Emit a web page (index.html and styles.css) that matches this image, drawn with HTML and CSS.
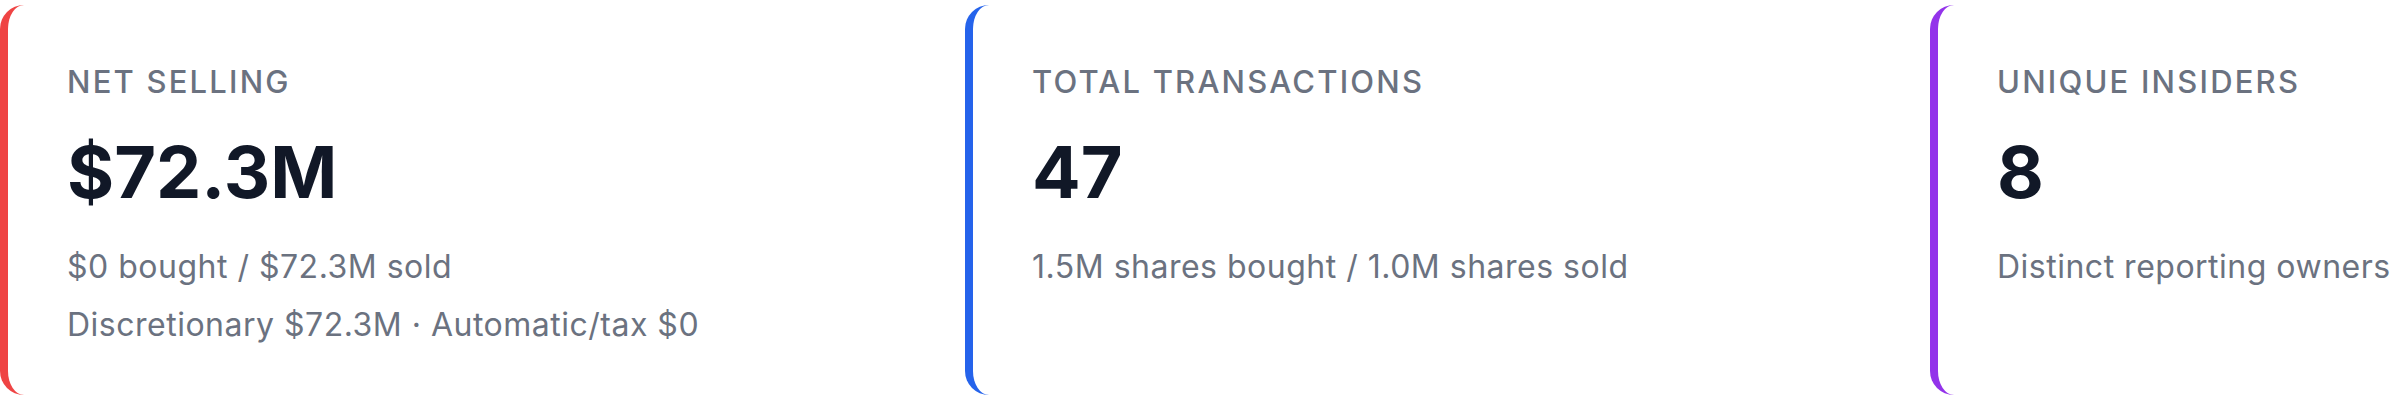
FILE: index.html
```html
<!DOCTYPE html>
<html lang="en">
<head>
<meta charset="utf-8">
<title>Insider summary</title>
<link rel="stylesheet" href="styles.css">
</head>
<body>
<div class="stats">
  <div class="card card-red">
    <div class="label">Net Selling</div>
    <div class="value">$72.3M</div>
    <div class="sub sub-first">$0 bought / $72.3M sold</div>
    <div class="sub sub-next">Discretionary $72.3M · Automatic/tax $0</div>
  </div>
  <div class="card card-blue">
    <div class="label">Total Transactions</div>
    <div class="value">47</div>
    <div class="sub sub-first">1.5M shares bought / 1.0M shares sold</div>
  </div>
  <div class="card card-purple">
    <div class="label">Unique Insiders</div>
    <div class="value">8</div>
    <div class="sub sub-first">Distinct reporting owners</div>
  </div>
</div>
</body>
</html>
```

FILE: styles.css
```css
html, body {
  margin: 0;
  padding: 0;
  background: #ffffff;
}

body {
  font-family: Inter, "Liberation Sans", sans-serif;
  overflow: hidden;
  width: 2400px;
  height: 401px;
}

.stats {
  display: grid;
  grid-template-columns: repeat(3, 933px);
  column-gap: 32px;
  padding-top: 5px;
}

.card {
  box-sizing: border-box;
  height: 390px;
  background: #ffffff;
  border-left: 8px solid #ef4444;
  border-radius: 24px;
  padding: 57px 40px 0 59px;
}

.card-red { border-left-color: #ef4444; }
.card-blue { border-left-color: #2563eb; }
.card-purple { border-left-color: #9333ea; }

.label {
  font-size: 31px;
  line-height: 40px;
  text-transform: uppercase;
  letter-spacing: 2.2px;
  color: #6b7280;
  font-weight: 500;
}

.value {
  margin-top: 30px;
  font-size: 72px;
  line-height: 80px;
  font-weight: 700;
  color: #111827;
}

.sub {
  font-size: 32px;
  line-height: 40px;
  letter-spacing: 0.5px;
  color: #6b7280;
  white-space: nowrap;
}

.sub-first { margin-top: 35px; }
.sub-next { margin-top: 18px; }
```
